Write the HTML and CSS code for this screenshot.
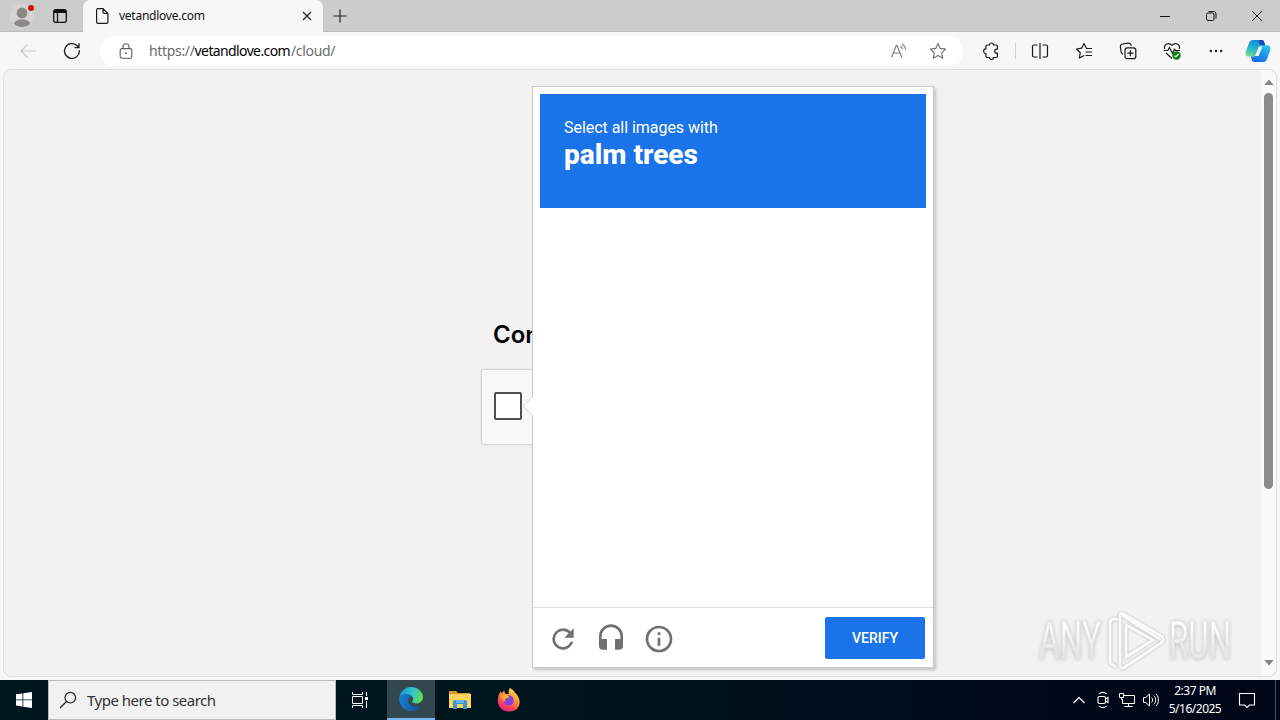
FILE: index.html
```html
<!DOCTYPE html>
<html lang="en">
<head>
<meta charset="utf-8">
<title>vetandlove.com</title>
<link rel="stylesheet" href="styles.css">
</head>
<body>
<div class="desktop">
  <header class="tabstrip">
    <div class="profile">
      <svg width="26" height="26" viewBox="0 0 26 26"><circle cx="13" cy="13" r="12" fill="#d5d3d2"/><circle cx="13" cy="10" r="5.4" fill="#8b8986"/><path d="M5 21c0-3 3.500-4.500 8-4.500s8 1.500 8 4.500c-2 2-5 3-8 3s-6-1-8-3z" fill="#8b8986"/><circle cx="22" cy="5" r="3" fill="#d90b17"/></svg>
    </div>
    <div class="workspaces">
      <svg width="16" height="16" viewBox="0 0 16 16" fill="none" stroke="#111" stroke-width="1.300"><rect x="1.700" y="1.700" width="12.600" height="12.600" rx="2"/><path d="M2 3.500h12" stroke-width="3"/><path d="M5.500 4v10"/></svg>
    </div>
    <div class="tab">
      <svg class="page-icon" width="14" height="18" viewBox="0 0 14 18" fill="none" stroke="#1b1b1b" stroke-width="1.200"><path d="M1.600 3c0-.8.600-1.400 1.400-1.400h5L12.900 6.500V15c0 .8-.6 1.400-1.400 1.400H3c-.8 0-1.400-.6-1.400-1.400zM8 1.600V5.100c0 .8.600 1.400 1.400 1.400h3.500"/></svg>
      <span class="tab-title">vetandlove.com</span>
      <svg width="10" height="10" viewBox="0 0 10 10" stroke="#222" stroke-width="1.200"><path d="M1 1l8 8M9 1L1 9"/></svg>
    </div>
    <div class="newtab"><svg width="14" height="14" viewBox="0 0 14 14" stroke="#222" stroke-width="1.200"><path d="M7 .5v13M.5 7h13"/></svg></div>
    <div class="window-controls">
      <div><svg width="12" height="12" viewBox="0 0 12 12"><path d="M1 6.500h10" stroke="#111"/></svg></div>
      <div><svg width="12" height="12" viewBox="0 0 12 12" fill="none" stroke="#111"><rect x="1.500" y="3" width="7.500" height="7.500" rx="1.500"/><path d="M3.500 1.500h5A2.500 2.500 0 0 1 11 4v4.500"/></svg></div>
      <div><svg width="12" height="12" viewBox="0 0 12 12" stroke="#111"><path d="M1 1l10 10M11 1L1 11"/></svg></div>
    </div>
  </header>

  <nav class="toolbar">
    <div class="tool"><svg width="18" height="16" viewBox="0 0 18 16" fill="none" stroke="#c9c9c9" stroke-width="1.200"><path d="M17 8H2M8.500 1.500L2 8l6.500 6.500"/></svg></div>
    <div class="tool"><svg width="18" height="18" viewBox="0 0 18 18" fill="none" stroke="#1b1b1b" stroke-width="1.300"><path d="M16.300 8.200A7.400 7.400 0 1 1 13.900 3.500L16 5.500M16 1.200v4.500h-4.500"/></svg></div>
    <div class="address">
      <svg class="lock" width="14" height="16" viewBox="0 0 14 16" fill="none" stroke="#5f5f5f" stroke-width="1.100"><rect x="1.200" y="5.600" width="11.600" height="9.600" rx="1.600"/><path d="M4 5.500V3.700a3 3 0 0 1 6 0v1.800"/><circle cx="7" cy="10.300" r="1" fill="#5f5f5f" stroke="none"/></svg>
      <div class="url"><span class="scheme">https://</span><span class="host">vetandlove.com</span><span class="path">/cloud/</span></div>
      <svg class="read" width="18" height="16" viewBox="0 0 18 16" fill="none" stroke="#767676" stroke-width="1.100"><path d="M1.500 14.500L6.300 2.300h.6l4.900 12.200M3.300 10h6.700M10.500 3.300c1 .7 1.700 1.700 1.900 3M12 .9c2.100 1.200 3.500 3.200 3.700 5.900"/></svg>
      <svg width="18" height="18" viewBox="0 0 18 18" fill="none" stroke="#6e6e6e" stroke-width="1.100" stroke-linejoin="round"><path d="M9 1.500l2.300 4.900 5.300.7-3.900 3.700 1 5.400L9 13.600l-4.700 2.600 1-5.400L1.400 7.100l5.300-.7z"/></svg>
    </div>
    <div class="tool ext"><svg width="18" height="18" viewBox="0 0 18 18" fill="none" stroke="#1b1b1b" stroke-width="1.200" stroke-linejoin="round"><path d="M5.300 3h2.200a2 2 0 0 1 4 0H14c.8 0 1.400.5 1.400 1.300v2.900h-.7a2 2 0 0 0 0 4h.7v3c0 .8-.5 1.300-1.400 1.300h-2.500a2 2 0 0 1-4 0H5.300c-.8 0-1.400-.5-1.400-1.300v-2.700a2.300 2.300 0 0 1 0-4.600V4.300c0-.8.500-1.300 1.400-1.300z"/></svg></div>
    <div class="separator"></div>
    <div class="tool"><svg width="18" height="18" viewBox="0 0 18 18" fill="none" stroke="#1b1b1b" stroke-width="1.200"><path d="M6.500 3H3C2 3 1.500 3.700 1.500 4.700v8.600c0 1 .5 1.700 1.500 1.700h3.500M11.500 3H15c1 0 1.500.7 1.500 1.700v8.600c0 1-.5 1.700-1.500 1.700h-3.500M9 1v16"/></svg></div>
    <div class="tool"><svg width="18" height="18" viewBox="0 0 18 18" fill="none" stroke="#1b1b1b" stroke-width="1.200" stroke-linejoin="round" stroke-linecap="round"><path d="M16.500 6.500h-5L9 1.500 6.700 6.200l-5.200.8 3.800 3.700-.9 5.300 4.400-2.300M11 10h5.500M11 13.500h5.500"/></svg></div>
    <div class="tool"><svg width="18" height="18" viewBox="0 0 18 18" fill="none" stroke="#1b1b1b" stroke-width="1.200" stroke-linecap="round"><rect x="6" y="5.800" width="10.800" height="10.800" rx="2.200"/><path d="M11.400 8.600v5.200M8.800 11.200h5.200M3.600 12A3 3 0 0 1 2.100 9.800L1.400 5A2.700 2.700 0 0 1 3.600 2l5.600-.9c1.500-.2 2.700.7 3 2.200"/></svg></div>
    <div class="tool"><svg width="20" height="20" viewBox="0 0 20 20" fill="none" stroke="#1b1b1b" stroke-width="1.200" stroke-linejoin="round"><path d="M2.700 8C1.500 3 6.500.8 10 4.300 13.500.8 18.500 3 17.300 8M1.700 9.500h4.100l1.700-3 3 6 2-4.500 1 1.500h4.700M4 12l6 5.500"/><circle cx="14.500" cy="14.500" r="4.200" fill="#107c10" stroke="none"/><path d="M12.500 14.600l1.300 1.300 2.700-2.900" stroke="#fff"/></svg></div>
    <div class="tool"><svg width="16" height="4" viewBox="0 0 16 4" fill="#222"><circle cx="2.800" cy="2" r="1.250"/><circle cx="8" cy="2" r="1.250"/><circle cx="13.200" cy="2" r="1.250"/></svg></div>
    <div class="copilot"><svg width="26" height="24" viewBox="0 0 26 24">
      <defs><linearGradient id="ca" x1=".5" y1="0" x2=".2" y2="1"><stop offset="0" stop-color="#1388d5"/><stop offset=".45" stop-color="#1bb3d0"/><stop offset="1" stop-color="#73dc86"/></linearGradient><linearGradient id="cb" x1=".7" y1="0" x2=".3" y2="1"><stop offset="0" stop-color="#29c2ef"/><stop offset="1" stop-color="#1268e8"/></linearGradient></defs>
      <path d="M8 1h8.500c2 0 2.500 1.300 3 3l.7 2.300h-2.700c-1.800 0-2.600 1-3.200 2.800l-2.200 6.400c-.5 1.500-1.300 2-2.700 2H4c-3 0-4-2-3-5.300L4 4c.7-2 2-3 4-3z" fill="url(#ca)"/>
      <path d="M18 23H9.500c-2 0-2.600-1.300-3-3l-.7-2.500h2.900c1.600 0 2.500-1 3-2.800l2.200-6.200c.5-1.500 1.300-2.200 2.900-2.200H22c3 0 4 2 3 5.500L22 20c-.7 2-2 3-4 3z" fill="url(#cb)"/>
      <path d="M16.500 1c2 0 2.500 1.300 3 3l.7 2.300h-3.400c-1 0-2-.6-2.400-2L13.500 1z" fill="#174bb8"/>
      <path d="M13.700 7.500h3.600l-3.600 9.500h-3.600z" fill="#f7f7f7"/></svg></div>
  </nav>

  <main class="viewport">
    <section class="page">
      <h1>Confirm you are human</h1>
      <div class="anchor"><div class="checkbox"></div></div>
      <svg class="watermark" width="210" height="68" viewBox="0 0 210 68">
        <defs><linearGradient id="mark" x1="0" x2="0" y1="0" y2="1"><stop offset=".3" stop-color="#fdfdfd"/><stop offset=".7" stop-color="#e6e6e6"/></linearGradient></defs>
        <g class="mark-text"><text x="5" y="51" textLength="62" lengthAdjust="spacingAndGlyphs">ANY</text><text x="135" y="51" textLength="62" lengthAdjust="spacingAndGlyphs">RUN</text></g>
        <g class="mark-logo"><path d="M84 13c-5-3-8 0-8 4v39l6 4"/><path d="M86 56V9c0-3 2-3 4-2l37 22c3 2 3 5 0 7L91 60c-3 2-5 1-5-3z"/><path d="M92 18v32l27-17zM88 8l39 25"/></g>
      </svg>
      <aside class="challenge">
        <svg class="pointer" width="12" height="22" viewBox="0 0 12 22"><path d="M11 1L1 11l10 10" fill="#fff" stroke="#d2d2d2"/><path d="M11.500 1v20" stroke="#fff"/></svg>
        <div class="prompt"><div class="instruction">Select all images with</div><strong>palm trees</strong></div>
        <div class="images"></div>
        <footer>
          <div class="challenge-tool"><svg width="32" height="32" viewBox="0 0 24 24" fill="#707070"><path d="M17.650 6.350A7.960 7.960 0 0 0 12 4a8 8 0 1 0 7.730 10h-2.080A6 6 0 1 1 12 6c1.660 0 3.140.69 4.220 1.780L13 11h7V4z"/></svg></div>
          <div class="challenge-tool"><svg width="32" height="32" viewBox="0 0 24 24" fill="#707070"><path d="M12 1a9 9 0 0 0-9 9v7a3 3 0 0 0 3 3h3v-8H5v-2a7 7 0 0 1 14 0v2h-4v8h3a3 3 0 0 0 3-3v-7a9 9 0 0 0-9-9z"/></svg></div>
          <div class="challenge-tool"><svg width="32" height="32" viewBox="0 0 24 24" fill="#707070"><path d="M11 17h2v-6h-2zM12 2a10 10 0 1 0 0 20 10 10 0 0 0 0-20zm0 18a8 8 0 1 1 0-16 8 8 0 0 1 0 16zM11 9h2V7h-2z"/></svg></div>
          <button>VERIFY</button>
        </footer>
      </aside>
    </section>
    <div class="scrollbar"><svg width="10" height="6" viewBox="0 0 10 6"><path d="M.3 6L5 .5 9.700 6z" fill="#858585"/></svg><div class="thumb"></div><svg class="down" width="10" height="6" viewBox="0 0 10 6"><path d="M.3 0L5 5.500 9.700 0z" fill="#858585"/></svg></div>
  </main>

  <footer class="taskbar">
    <div class="start"><svg width="16" height="16" viewBox="0 0 16 16" fill="#fff"><path d="M0 2.300l6.500-.9v6.100H0zM7.300 1.300L16 0v7.500H7.300zM0 8.300h6.500v6.200L0 13.600zM7.300 8.300H16V16l-8.700-1.300z"/></svg></div>
    <div class="search"><svg width="18" height="18" viewBox="0 0 18 18" fill="none" stroke="#222" stroke-width="1.200"><circle cx="11.300" cy="6.700" r="5.300"/><path d="M7.500 10.500L1 17"/></svg><span>Type here to search</span></div>
    <div class="taskview"><svg width="18" height="18" viewBox="0 0 18 18" fill="none" stroke="#fff"><path d="M1.500 1v2.500h10V1M1.500 17v-2.500h10V17M1.500 5.500h10v7h-10zM15.500 1v4M15.500 10v7"/><path d="M14 6h3v3h-3z" fill="#fff" stroke="none"/></svg></div>
    <div class="app active"><svg width="24" height="24" viewBox="0 0 24 24">
      <defs><linearGradient id="ea" x1="0" x2="1" y1=".2" y2=".4"><stop offset="0" stop-color="#2088d0"/><stop offset=".5" stop-color="#2cc0d5"/><stop offset="1" stop-color="#62d957"/></linearGradient><linearGradient id="eb" x1="0" x2="1"><stop offset="0" stop-color="#1681d5"/><stop offset="1" stop-color="#114a8b"/></linearGradient></defs>
      <path d="M.2 11C1 4 6 0 12 0c7 0 12 5 12 10 0 4-3 6.500-6.500 6.500-3 0-4.800-1-4.300-2 1.200-1.500 1.200-3.200.2-4.500C11 7 4 6.500.2 11z" fill="url(#ea)"/><path d="M.1 11.500C2 6 11 5.800 13.500 10c-6-1.300-6.500 9 3 9.500 2.700.1 4.600-.9 5.500-1.300-2 3.600-5.500 5.800-10 5.800C5 24 0 18 .1 11.500z" fill="url(#eb)"/></svg></div>
    <div class="app folder"><svg width="22" height="20" viewBox="0 0 22 20"><path d="M0 1h7l2 2h12v6H0z" fill="#d79a28"/><path d="M0 4h22v14H0z" fill="#ffd45d"/><path d="M4 19v-8l2-1h10l2 1v8h-4v-5H8v5z" fill="#3894d6"/><path d="M7 10h8v3H7z" fill="#62b7ec"/></svg></div>
    <div class="app"><svg width="24" height="24" viewBox="0 0 24 24"><defs><linearGradient id="fa" x1=".8" y1="0" x2=".25" y2="1"><stop offset="0" stop-color="#ffe04c"/><stop offset=".4" stop-color="#ff9830"/><stop offset=".75" stop-color="#ff4058"/><stop offset="1" stop-color="#df1b8f"/></linearGradient></defs><path d="M13 0c3 1.500 4.500 3.500 5 5 1 .4 1.500.8 1.800 1.500 5 6 4 17-7.800 17C4 23.500-.2 17 1 10.500 1.300 7 2.600 4.700 4 3c.1 1.500.4 2 .8 2.500C5.500 4 6.500 3 7.500 2.500 7.300 4.500 8 5.500 9 6h3c-.8-2-.3-4.700 1-6z" fill="url(#fa)"/><path d="M7 11c0-3 4-5 7.500-3 4 3 2.500 9.500-2.500 9.500S6 14 7 11z" fill="#8543dc"/><path d="M5 7c2-1 4-1 5.500.2l2 2.100-4 1.500c-1 1-.5 2 0 2.700C5 12.500 4 10 5 7z" fill="#ffac32"/></svg></div>
    <div class="tray">
      <div><svg width="14" height="8" viewBox="0 0 14 8" fill="none" stroke="#fff" stroke-width="1.200"><path d="M1.500 7L7 1.500 12.500 7"/></svg></div>
      <div><svg width="14" height="18" viewBox="0 0 14 18" fill="none" stroke="#fff" stroke-width="1.100"><rect x="2" y="5.500" width="7.500" height="7" rx="1.500"/><path d="M9.500 8L12 6.500v5L9.500 10M3 3C5 .8 8.500.8 10.500 3M3 15c2 2.200 5.500 2.200 7.500 0"/></svg></div>
      <div><svg width="18" height="16" viewBox="0 0 18 16" fill="none" stroke="#fff"><path d="M6 3.500h10.500v8H4.500V7M10.500 11.500v3M6.500 14.500h8M1.500 1.500h4v4h-4zM3.500 5.500v2h1"/></svg></div>
      <div><svg width="18" height="16" viewBox="0 0 18 16" fill="none" stroke="#fff"><path d="M1.500 5.500h2.300L7.500 2v12l-3.700-3.500H1.500zM9.700 5.500c1.200 1.500 1.200 3.500 0 5M12 3.700c2.200 2.700 2.200 6 0 8.600M14.200 2c3 3.700 3 8.300 0 12"/></svg></div>
      <div class="clock"><span>2:37 PM</span><span class="date">5/16/2025</span></div>
      <div class="notify"><svg width="18" height="17" viewBox="0 0 18 17" fill="none" stroke="#fff" stroke-width="1.100"><path d="M1.500 1.500h15v11.500h-5L9 15.500 6.500 13h-5z"/></svg></div>
      <div class="show-desktop"></div>
    </div>
  </footer>
</div>
</body>
</html>
```
FILE: styles.css
```css
* { box-sizing: border-box; }
body { margin: 0; overflow: hidden; font-family: "Noto Sans", sans-serif; color: #111; }
svg { display: block; flex-shrink: 0; }
.desktop { width: 1280px; height: 720px; display: flex; flex-direction: column; background: #f7f7f7; }
.tabstrip { height: 32px; flex: none; display: flex; background: #ccc; }
.profile { width: 44px; display: flex; align-items: center; justify-content: center; }
.workspaces { width: 39px; display: flex; align-items: center; padding-left: 8px; }
.profile, .workspaces { border-bottom: 1px solid #bdbdbd; }
.tab { width: 240px; padding: 0 11px 0 12px; display: flex; align-items: center; background: #f7f7f7; border-radius: 7px 7px 0 0; }
.tab-title { flex: 1; margin-left: 10px; font-size: 12px; line-height: 20px; letter-spacing: -.25px; white-space: nowrap; }
.newtab { width: 34px; display: flex; align-items: center; justify-content: center; border-bottom: 1px solid #bdbdbd; }
.window-controls { flex: 1; display: flex; justify-content: flex-end; border-bottom: 1px solid #bdbdbd; }
.window-controls div { width: 46px; display: flex; align-items: center; justify-content: center; }
.toolbar { height: 37px; flex: none; display: flex; align-items: center; padding: 1px 2px 0 6px; }
.tool { width: 44px; display: flex; align-items: center; justify-content: center; }
.address { width: 863px; height: 30px; margin-left: 6px; padding: 0 16px 0 19px; border-radius: 15px; background: #fff; display: flex; align-items: center; }
.url { margin-left: 16px; flex: 1; display: flex; font-size: 14px; line-height: 20px; white-space: nowrap; letter-spacing: -.33px; color: #6b6b6b; }
.host { color: #000; letter-spacing: -.62px; margin-right: 1px; }
.read { margin-right: 21px; }
.ext { margin-left: 6px; }
.separator { width: 1px; height: 16px; margin: 0 2px; background: #cfcfcf; }
.copilot { width: 40px; display: flex; justify-content: center; }
.viewport { height: 608px; flex: none; margin: 0 3px; display: flex; background: #f2f2f2; border: 1px solid #dedede; border-radius: 8px; }
.page { flex: 1; position: relative; padding: 249px 0 0 477px; }
h1 { width: 280px; margin: 0 0 19px 12px; font: 600 24px/31px Inter, sans-serif; color: #000; white-space: nowrap; }
.anchor { width: 302px; height: 76px; padding: 22px 12px; background: #f9f9f9; border: 1px solid #d3d3d3; border-radius: 3px; box-shadow: 0 0 3px rgba(0,0,0,.08); }
.checkbox { width: 28px; height: 28px; border: 2px solid #4f4f4f; border-radius: 2px; background: #fff; }
.challenge { position: absolute; left: 528px; top: 16px; width: 402px; height: 582px; display: flex; flex-direction: column; background: #fff; border: 1px solid #ccc; box-shadow: 2px 2px 3px rgba(0,0,0,.2); font-family: Roboto, sans-serif; }
.pointer { position: absolute; left: -11px; top: 308px; }
.prompt { height: 114px; margin: 7px 7px 0; padding: 24px; color: #fff; background: #1a73e8; }
.instruction { font-size: 16px; line-height: 19px; letter-spacing: -.04px; }
.prompt strong { display: block; padding-top: 1px; font-size: 28px; line-height: 34px; font-weight: 800; }
.images { flex: 1; }
.challenge footer { height: 60px; padding: 2px 8px 0 6px; border-top: 1px solid #dfdfdf; display: flex; align-items: center; }
.challenge-tool { width: 48px; padding-top: 1px; display: flex; justify-content: center; }
.challenge button { width: 100px; height: 42px; margin: -1px 0 0 auto; padding: 0; border: 0; border-radius: 2px; background: #1a73e8; color: #fff; font: 500 14px/42px Roboto, sans-serif; }
.scrollbar { width: 15px; display: flex; flex-direction: column; align-items: center; padding: 9px 0 10px; background: #fafafa; border-radius: 0 8px 8px 0; }
.thumb { width: 9px; height: 396px; margin-top: 8px; border-radius: 5px; background: #8b8b8b; }
.down { margin-top: auto; }
.watermark { position: absolute; left: 1030px; top: 537px; overflow: visible; }
.mark-text { font: 400 51px Roboto, sans-serif; fill: url(#mark); stroke: #e2e2e2; stroke-width: .8px; filter: drop-shadow(0 1px 2px rgba(0,0,0,.2)); }
.mark-logo { fill: none; stroke: #fafafa; stroke-width: 3px; filter: drop-shadow(0 0 1px rgba(0,0,0,.28)); }
.taskbar { height: 40px; margin-top: auto; flex: none; display: flex; background: linear-gradient(90deg, #00171f 0%, #00151f 45%, #000b1c 75%, #000718 100%); color: #fff; }
.start { width: 48px; display: flex; align-items: center; justify-content: center; }
.search { width: 288px; padding-left: 10px; display: flex; align-items: center; background: #f1f1f1; border: 1px solid #bababa; color: #333; font-size: 15px; letter-spacing: -.5px; }
.search span { margin-left: 10px; white-space: nowrap; }
.taskview { width: 51px; padding-right: 3px; display: flex; align-items: center; justify-content: center; }
.app { width: 49px; display: flex; align-items: center; justify-content: center; }
.active { width: 48px; background: #33474e; border-bottom: 2px solid #76b9ed; }
.tray { flex: 1; display: flex; justify-content: flex-end; }
.tray div { width: 24px; display: flex; align-items: center; justify-content: center; }
.tray .clock { width: 64px; flex-direction: column; font-size: 12px; line-height: 18px; letter-spacing: -.5px; white-space: nowrap; }
.tray .notify { width: 40px; }
.tray .show-desktop { width: 5px; margin-left: 8px; border-left: 1px solid #4b5360; }
```
